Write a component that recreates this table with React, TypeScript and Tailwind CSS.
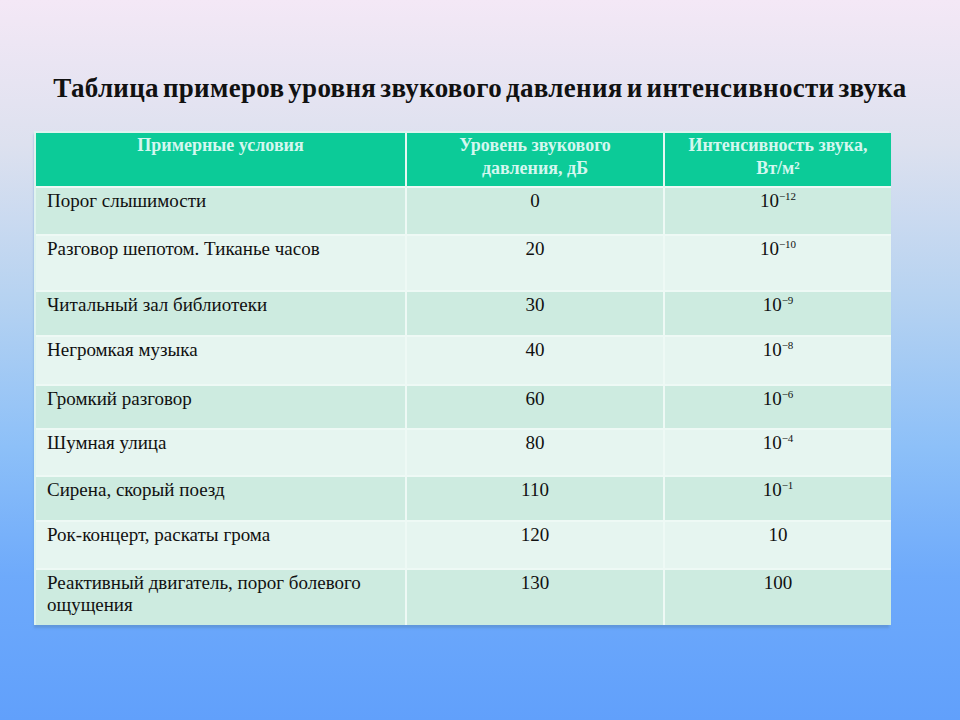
const rows: { label: string; db: string; base: string; exp?: string; h: string }[] = [
  { label: "Порог слышимости", db: "0", base: "10", exp: "−12", h: "h-[48px]" },
  { label: "Разговор шепотом. Тиканье часов", db: "20", base: "10", exp: "−10", h: "h-[56px]" },
  { label: "Читальный зал библиотеки", db: "30", base: "10", exp: "−9", h: "h-[45px]" },
  { label: "Негромкая музыка", db: "40", base: "10", exp: "−8", h: "h-[49px]" },
  { label: "Громкий разговор", db: "60", base: "10", exp: "−6", h: "h-[44px]" },
  { label: "Шумная улица", db: "80", base: "10", exp: "−4", h: "h-[47px]" },
  { label: "Сирена, скорый поезд", db: "110", base: "10", exp: "−1", h: "h-[45px]" },
  { label: "Рок-концерт, раскаты грома", db: "120", base: "10", h: "h-[48px]" },
  { label: "Реактивный двигатель, порог болевого ощущения", db: "130", base: "100", h: "h-[56px]" },
];

export default function App() {
  return (
    <div className="w-[960px] h-[720px] overflow-hidden bg-[linear-gradient(180deg,#f4e8f6_0%,#dde1ef_20%,#b5d2f1_42%,#8dc0f8_62%,#6eaafb_80%,#61a0fb_100%)] font-[family-name:'Liberation_Serif',serif]">
      <h1 className="pt-[72px] text-center text-[27px] leading-[32px] font-bold tracking-[0.3px] [word-spacing:-3px] text-[#111]">
        Таблица примеров уровня звукового давления и интенсивности звука
      </h1>

      <div className="ml-[34px] mt-[27px] w-[855px] border-l-2 border-t-2 border-[#dff3ee] shadow-[0_3px_2px_rgba(90,140,200,0.6)]">
        <table className="w-full border-collapse table-fixed">
          <colgroup>
            <col className="w-[370px]" />
            <col className="w-[258px]" />
            <col className="w-[227px]" />
          </colgroup>
          <thead>
            <tr className="h-[54px] bg-[#0ccb98] text-[#d4f7ef] text-[18px] leading-[23px] font-bold">
              <th className="align-top pt-[1px] border-r-2 border-[#e6f7f2] font-bold">Примерные условия</th>
              <th className="align-top pt-[1px] border-r-2 border-[#e6f7f2] font-bold">
                Уровень звукового
                <br />
                давления, дБ
              </th>
              <th className="align-top pt-[1px] font-bold">
                Интенсивность звука,
                <br />
                Вт/м²
              </th>
            </tr>
          </thead>
          <tbody className="text-[19px] leading-[22px] text-[#111]">
            {rows.map((r, i) => (
              <tr
                key={r.label}
                className={`${r.h} border-t-2 border-[#eef9f5] ${i % 2 === 0 ? "bg-[#cdebe0]" : "bg-[#e6f5f0]"}`}
              >
                <td className="align-top pt-[2px] pl-[11px] pr-[30px] border-r-2 border-[#eef9f5]">{r.label}</td>
                <td className="align-top pt-[2px] text-center border-r-2 border-[#eef9f5]">{r.db}</td>
                <td className="align-top pt-[2px] text-center">
                  {r.base}
                  {r.exp && <sup className="text-[11px] -top-[7px]">{r.exp}</sup>}
                </td>
              </tr>
            ))}
          </tbody>
        </table>
      </div>
    </div>
  );
}
